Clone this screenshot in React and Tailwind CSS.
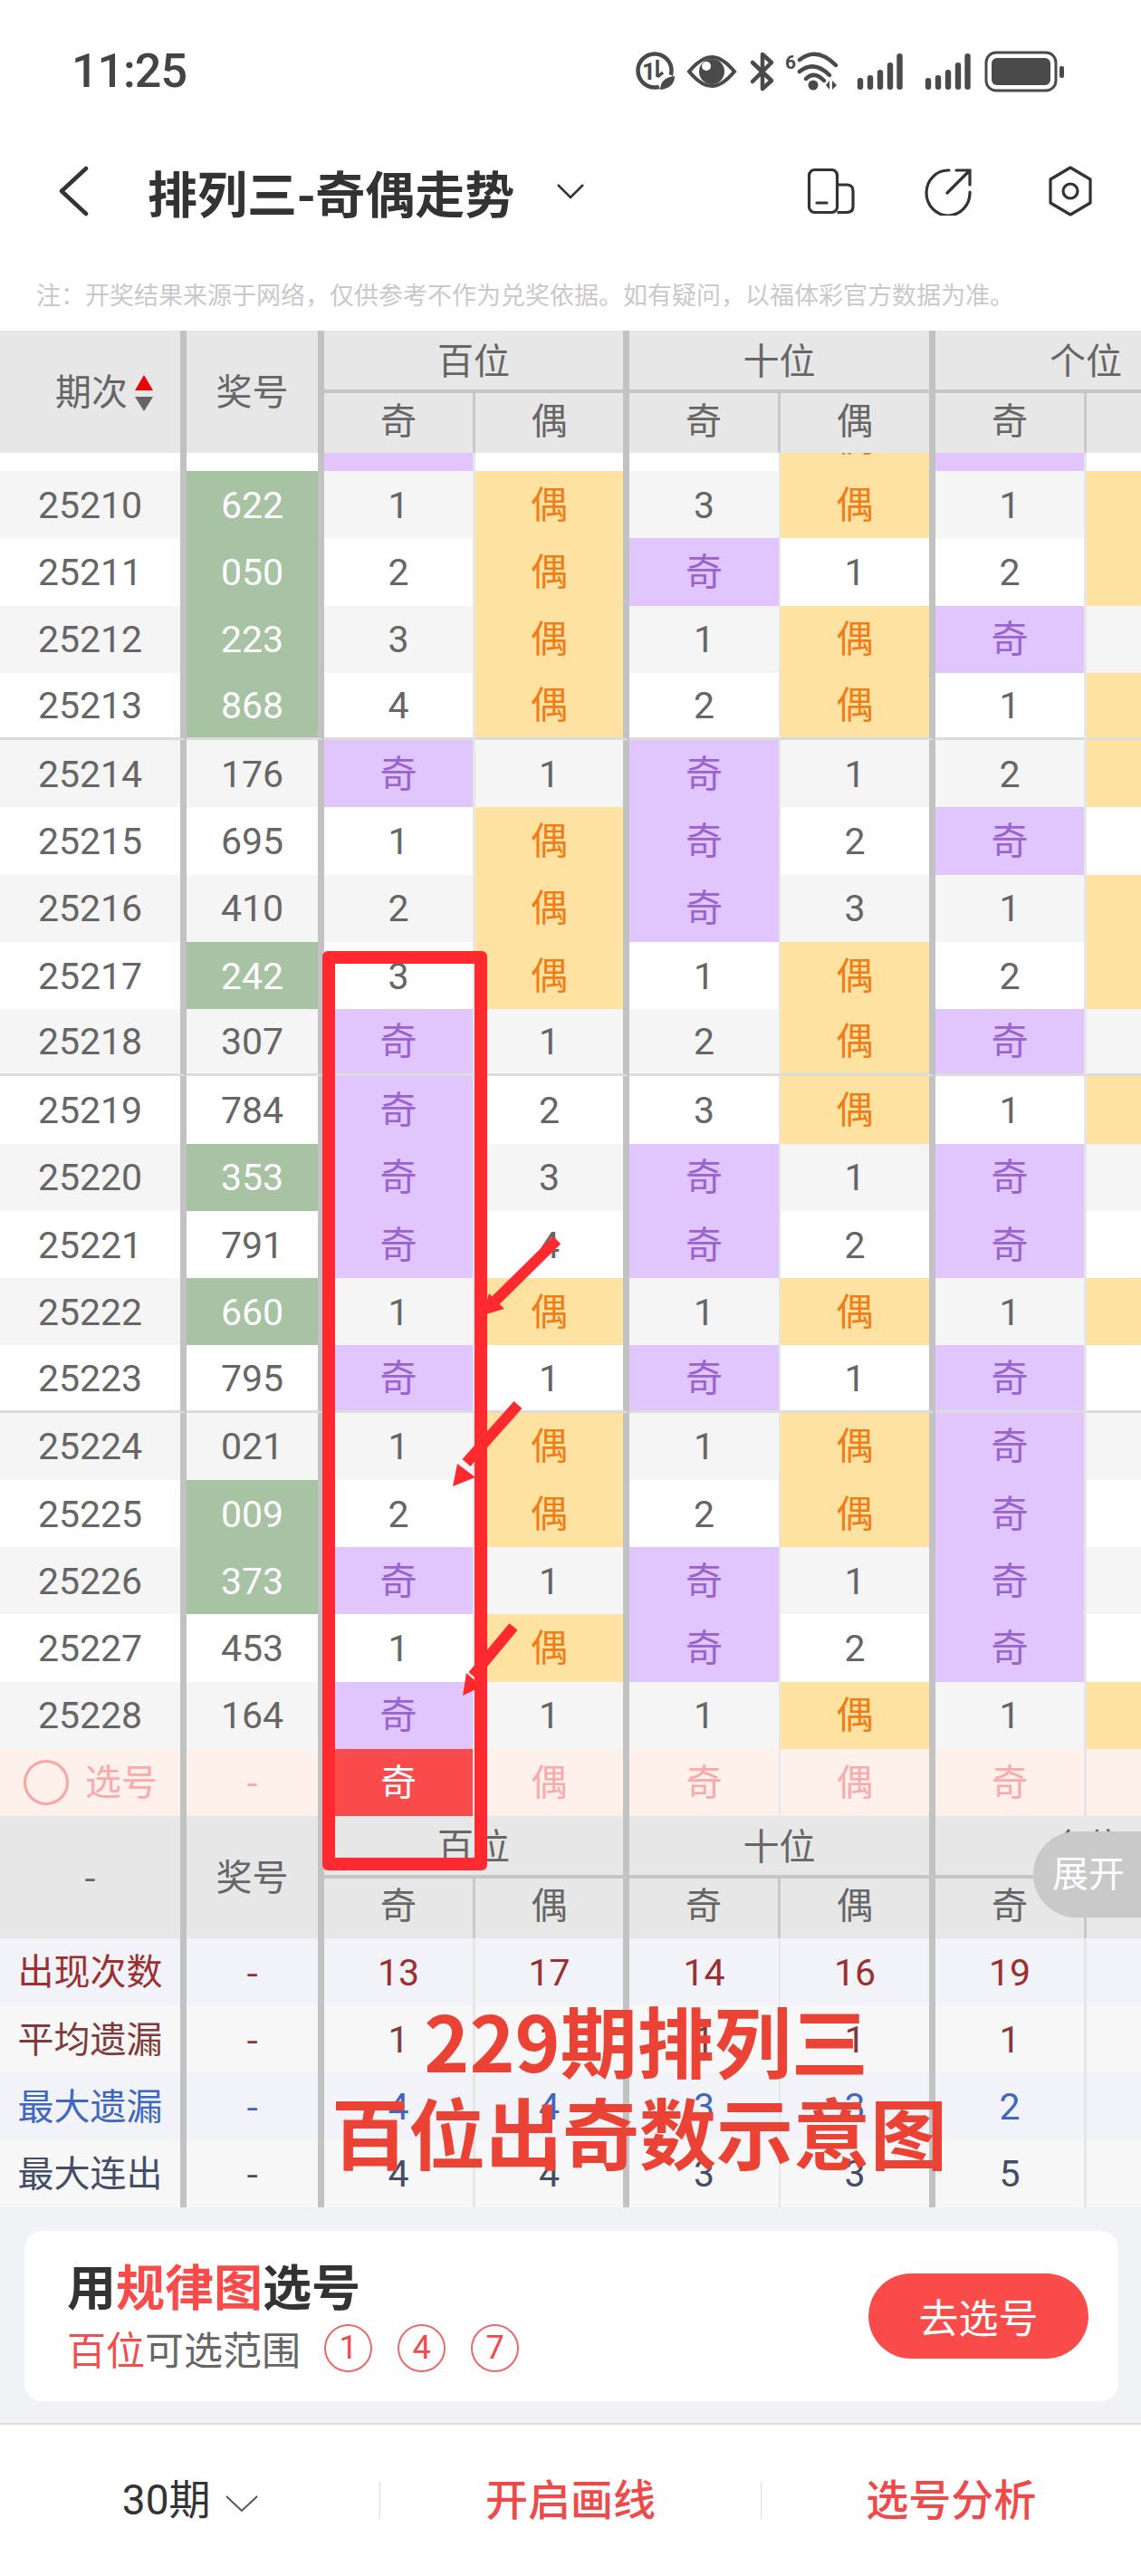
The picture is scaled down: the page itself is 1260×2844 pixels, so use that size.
import React from 'react';

const grid = 'grid grid-cols-[206px_152px_167px_170px_167px_171px_167px_165px]';
const cjk = "font-['Noto_Sans_CJK_SC',sans-serif]";
const sep = [
  'border-r-[7px] border-r-[#c2c2c2]',
  'border-r-[7px] border-r-[#c2c2c2]',
  'border-r-[3px] border-r-[#e6e6e6]',
  'border-r-[7px] border-r-[#c2c2c2]',
  'border-r-[2px] border-r-[#e6e6e6]',
  'border-r-[7px] border-r-[#c2c2c2]',
  'border-r-[3px] border-r-[#e6e6e6]',
  '',
];

// period, number, green?, then 百 / 十 / 个 values
const rows = [
  ['25210', '622', 1, 1, '偶', 3, '偶', 1, '偶'],
  ['25211', '050', 1, 2, '偶', '奇', 1, 2, '偶'],
  ['25212', '223', 1, 3, '偶', 1, '偶', '奇', 1],
  ['25213', '868', 1, 4, '偶', 2, '偶', 1, '偶'],
  ['25214', '176', 0, '奇', 1, '奇', 1, 2, '偶'],
  ['25215', '695', 0, 1, '偶', '奇', 2, '奇', 1],
  ['25216', '410', 0, 2, '偶', '奇', 3, 1, '偶'],
  ['25217', '242', 1, 3, '偶', 1, '偶', 2, '偶'],
  ['25218', '307', 0, '奇', 1, 2, '偶', '奇', 1],
  ['25219', '784', 0, '奇', 2, 3, '偶', 1, '偶'],
  ['25220', '353', 1, '奇', 3, '奇', 1, '奇', 1],
  ['25221', '791', 0, '奇', 4, '奇', 2, '奇', 2],
  ['25222', '660', 1, 1, '偶', 1, '偶', 1, '偶'],
  ['25223', '795', 0, '奇', 1, '奇', 1, '奇', 1],
  ['25224', '021', 0, 1, '偶', 1, '偶', '奇', 1],
  ['25225', '009', 1, 2, '偶', 2, '偶', '奇', 2],
  ['25226', '373', 1, '奇', 1, '奇', 1, '奇', 3],
  ['25227', '453', 0, 1, '偶', '奇', 2, '奇', 4],
  ['25228', '164', 0, '奇', 1, 1, '偶', 1, '偶'],
];

const stats = [
  { label: '出现次数', text: 'text-[#9c2f2f]', bg: 'bg-[#f2f3f8]', vals: [13, 17, 14, 16, 19] },
  { label: '平均遗漏', text: 'text-[#7f3b3b]', bg: 'bg-[#f7f7f7]', vals: [1, 1, 1, 1, 1] },
  { label: '最大遗漏', text: 'text-[#3f67bf]', bg: 'bg-[#f2f3f8]', vals: [4, 4, 3, 3, 2] },
  { label: '最大连出', text: 'text-[#434d68]', bg: 'bg-[#f7f7f7]', vals: [4, 4, 3, 3, 5] },
];

const Cell = ({ idx, value, base, line }) => {
  let look = `${base} text-[#666666]`;
  if (value === '奇') look = 'bg-[#e0c6fd] text-[#9a63cf]';
  if (value === '偶') look = 'bg-[#fee2a1] text-[#ee7d1a]';
  return (
    <div className={`flex items-center justify-center pt-[3px] ${sep[idx]} ${look} ${line ? 'border-b-[3px] border-b-[#dcdcdc]' : ''}`}>
      {value}
    </div>
  );
};

const DataRow = ({ row, index }) => {
  const base = index % 2 === 0 ? 'bg-[#f5f5f5]' : 'bg-white';
  const line = index === 3 || index === 8 || index === 13;
  return (
    <div className={`${grid} h-[74.26px] text-[41px]`}>
      <Cell idx={0} value={row[0]} base={base} line={line} />
      <div className={`flex items-center justify-center pt-[3px] ${sep[1]} ${row[2] ? 'bg-[#a8c2a4] text-white' : `${base} text-[#666666]`} ${line ? 'border-b-[3px] border-b-[#dcdcdc]' : ''}`}>
        {row[1]}
      </div>
      {row.slice(3).map((v, i) => (
        <Cell key={i} idx={i + 2} value={v} base={base} line={line} />
      ))}
    </div>
  );
};

const TableHead = ({ first, firstClass }) => (
  <div className={`${grid} bg-[#e7e7e7] text-[40px] text-[#666666] h-[135px]`}>
    <div className={`row-span-2 flex items-center pt-[3px] ${sep[0]} ${firstClass}`}>{first}</div>
    <div className={`row-span-2 flex items-center justify-center pt-[3px] ${sep[1]}`}>奖号</div>
    {['百位', '十位', '个位'].map((t, i) => (
      <div key={t} className={`col-span-2 h-[69px] pt-[5px] flex items-center justify-center border-b-[4px] border-b-[#c6c6c6] ${i < 2 ? sep[3] : ''}`}>
        {t}
      </div>
    ))}
    {['奇', '偶', '奇', '偶', '奇', ''].map((t, i) => (
      <div key={i} className={`h-[66px] pb-[3px] flex items-center justify-center ${i % 2 === 0 ? 'border-r-[3px] border-r-[#c9c9c9]' : i < 5 ? sep[3] : ''}`}>
        {t}
      </div>
    ))}
  </div>
);

const StatusIcons = () => (
  <svg width="474" height="56" viewBox="703 50 474 56" fill="none" stroke="#4a4a4a">
    {/* data saver */}
    <circle cx="724" cy="77" r="18.5" strokeWidth="4.5" />
    <text x="710" y="87" fontSize="26" fontWeight="700" fill="#4a4a4a" stroke="none" fontFamily="Roboto">1</text>
    <path d="M727 65V84M727 84L733 79" strokeWidth="3.5" />
    <circle cx="738" cy="91" r="10" fill="#fff" stroke="none" />
    <path d="M730 98C730 89 736 84 746 83C746 92 740 97 730 98Z" fill="#4a4a4a" stroke="none" />
    {/* eye */}
    <path d="M762 78C772 66 780 62 787 62C794 62 802 66 812 78C802 90 794 94 787 94C780 94 772 90 762 78Z" strokeWidth="4" />
    <circle cx="787" cy="78" r="14" fill="#4a4a4a" stroke="none" />
    <circle cx="781" cy="72" r="5" fill="#fff" stroke="none" />
    {/* bluetooth */}
    <path d="M832 68L853 88L843 97V78M843 76V59L853 68L832 89" strokeWidth="4.5" strokeLinecap="round" strokeLinejoin="round" />
    {/* wifi 6 */}
    <text x="868" y="75" fontSize="21" fontWeight="700" fill="#4a4a4a" stroke="none" fontFamily="Roboto">6</text>
    <path d="M884 65Q903 50 924 71M884 78Q900 65 917 82M891 86Q900 77 911 88" strokeWidth="4.5" strokeLinecap="round" />
    <circle cx="899" cy="93" r="5.5" fill="#4a4a4a" stroke="none" />
    <path d="M913 93L917 88V98ZM920 88V98L925 93Z" fill="#4a4a4a" stroke="none" />
    {/* signal */}
    {[[951, 85], [962, 82], [973, 76], [984, 68], [994.5, 58], [1026, 85], [1037, 82], [1048, 76], [1059, 68], [1069.5, 58]].map(([x, y]) => (
      <rect key={x} x={x - 3.2} y={y} width="6.4" height={98 - y} rx="3.2" fill="#4a4a4a" stroke="none" />
    ))}
    {/* battery */}
    <rect x="1090" y="57" width="77" height="42" rx="11" strokeWidth="3" />
    <rect x="1096" y="63" width="65" height="30" rx="6" fill="#4a4a4a" stroke="none" />
    <rect x="1171" y="72" width="5" height="13" rx="2" fill="#4a4a4a" stroke="none" />
  </svg>
);

const Arrows = () => (
  <svg className="absolute left-0 top-0 pointer-events-none" width="1260" height="2844" viewBox="0 0 1260 2844" fill="#fe2a2f" stroke="none">
    <path d="M615 1369L545 1438" stroke="#fe2a2f" strokeWidth="12" />
    <polygon points="533,1452 557,1445 540,1428" />
    <path d="M572 1551L515 1615" stroke="#fe2a2f" strokeWidth="12" />
    <polygon points="500,1641 505,1616 525,1631" />
    <path d="M567 1796L522 1850" stroke="#fe2a2f" strokeWidth="12" />
    <polygon points="511,1872 515,1847 532,1862" />
  </svg>
);

export default function App() {
  return (
    <div className="relative w-[1260px] h-[2844px] overflow-hidden bg-white font-['Roboto','Noto_Sans_CJK_SC',sans-serif]">
      {/* status bar */}
      <div className="h-[157px] flex items-center justify-between pl-[79px] pr-[84px]">
        <span className="text-[52px] leading-none font-medium text-[#444444] tracking-[-1px]">11:25</span>
        <StatusIcons />
      </div>

      {/* title bar */}
      <div className="h-[108px] flex items-center">
        <svg className="ml-[64px]" width="34" height="56" viewBox="0 0 34 56" fill="none" stroke="#333333" strokeWidth="4.5" strokeLinecap="round" strokeLinejoin="round">
          <path d="M31 3L4 28L31 53" />
        </svg>
        <span className={`ml-[65px] text-[55px] leading-none font-bold text-[#333333] ${cjk}`}>排列三-奇偶走势</span>
        <svg className="ml-[46px]" width="32" height="18" viewBox="0 0 32 18" fill="none" stroke="#333333" strokeWidth="2.5">
          <path d="M2 2L16 16L30 2" />
        </svg>
        <svg className="ml-auto" width="54" height="52" viewBox="0 0 54 52" fill="none" stroke="#333333" strokeWidth="3.2" strokeLinejoin="round">
          <rect x="2.5" y="2.5" width="31" height="47" rx="6" />
          <path d="M33.5 19H44Q51 19 51 26V43Q51 49.5 44 49.5H33.5" />
          <path d="M11 39H22" strokeLinecap="round" />
        </svg>
        <svg className="ml-[75px]" width="54" height="54" viewBox="0 0 54 54" fill="none" stroke="#333333" strokeWidth="3.2" strokeLinecap="round">
          <path d="M28 4A24 25 0 1 0 51 28" />
          <path d="M26 29L50 5M36 4H51V20" />
        </svg>
        <svg className="ml-[83px] mr-[53px]" width="50" height="56" viewBox="0 0 50 56" fill="none" stroke="#333333" strokeWidth="3.2" strokeLinejoin="round">
          <path d="M25 2L47 15V41L25 54L3 41V15Z" />
          <circle cx="25" cy="28" r="8" />
        </svg>
      </div>

      {/* note */}
      <div className={`h-[100px] pt-[20px] pl-[40px] flex items-center text-[27px] text-[#c9c9c9] whitespace-nowrap ${cjk}`}>
        注：开奖结果来源于网络，仅供参考不作为兑奖依据。如有疑问，以福体彩官方数据为准。
      </div>

      {/* table */}
      <TableHead
        first={
          <>
            <span>期次</span>
            <svg className="ml-[8px]" width="20" height="40" viewBox="0 0 20 40">
              <polygon points="10,0 20,17 0,17" fill="#f00000" />
              <polygon points="0,24 20,24 10,40" fill="#666666" />
            </svg>
          </>
        }
        firstClass="pl-[61px]"
      />

      <div className="h-[20px] overflow-hidden">
        <div className="-mt-[54px]">
          <div className={`${grid} h-[74.26px] text-[41px] bg-white`}>
            <Cell idx={0} value="" base="bg-white" />
            <Cell idx={1} value="" base="bg-white" />
            <div className={`bg-[#e0c6fd] ${sep[2]}`} />
            <Cell idx={3} value="" base="bg-white" />
            <Cell idx={4} value="" base="bg-white" />
            <Cell idx={5} value="偶" base="bg-white" />
            <div className={`bg-[#e0c6fd] ${sep[6]}`} />
            <Cell idx={7} value="" base="bg-white" />
          </div>
        </div>
      </div>

      {rows.map((row, i) => (
        <DataRow key={row[0]} row={row} index={i} />
      ))}

      {/* pick row */}
      <div className={`${grid} h-[74px] bg-[#fef0ea] text-[40px] text-[#f9aaaa]`}>
        <div className={`flex items-center pl-[26px] gap-[18px] ${sep[0]}`}>
          <span className="w-[50px] h-[50px] rounded-full border-[3px] border-[#f7a5a5]" />
          <span className="pt-[3px]">选号</span>
        </div>
        <div className={`flex items-center justify-center pb-[5px] ${cjk} ${sep[1]}`}>-</div>
        <div className={`flex items-center justify-center pt-[3px] bg-[#f94b4b] text-white ${sep[2]}`}>奇</div>
        <div className={`flex items-center justify-center pt-[3px] ${sep[3]}`}>偶</div>
        <div className={`flex items-center justify-center pt-[3px] ${sep[4]}`}>奇</div>
        <div className={`flex items-center justify-center pt-[3px] ${sep[5]}`}>偶</div>
        <div className={`flex items-center justify-center pt-[3px] ${sep[6]}`}>奇</div>
        <div />
      </div>

      <TableHead first={<span className={`pb-[8px] ${cjk}`}>-</span>} firstClass="justify-center" />

      {stats.map((s) => (
        <div key={s.label} className={`${grid} h-[74.25px] text-[41px] ${s.bg} ${s.text}`}>
          <div className={`flex items-center justify-center pt-[3px] text-[40px] ${sep[0]}`}>{s.label}</div>
          <div className={`flex items-center justify-center pb-[5px] ${cjk} ${sep[1]}`}>-</div>
          {[...s.vals, ''].map((v, i) => (
            <div key={i} className={`flex items-center justify-center pt-[3px] ${sep[i + 2]}`}>{v}</div>
          ))}
        </div>
      ))}

      {/* rule card */}
      <div className="h-[240px] bg-[#f1f2f5] pt-[26px] pl-[27px] pr-[25px] border-b-[2px] border-b-[#dddddd]">
        <div className="h-[188px] bg-white rounded-[20px] flex items-center justify-between pl-[47px] pr-[33px]">
          <div className={`flex flex-col pb-[3px] ${cjk}`}>
            <div className="text-[54px] leading-[70px] font-bold text-[#333333]">
              用<span className="text-[#fa4b4b]">规律图</span>选号
            </div>
            <div className="flex items-center mt-[4px] text-[43px] leading-[60px] text-[#666666]">
              <span className="text-[#ef4f4f]">百位</span>可选范围
              <div className="flex gap-[28px] ml-[26px] font-['Roboto',sans-serif]">
                {[1, 4, 7].map((n) => (
                  <span key={n} className="w-[53px] h-[53px] rounded-full border-[2px] border-[#e86a6a] text-[#ef4a4a] text-[36px] flex items-center justify-center">
                    {n}
                  </span>
                ))}
              </div>
            </div>
          </div>
          <div className={`w-[243px] h-[94px] rounded-full bg-[#fa4b4b] text-white text-[44px] flex items-center justify-center ${cjk}`}>
            去选号
          </div>
        </div>
      </div>

      {/* bottom bar */}
      <div className="h-[165px] flex items-center text-[47px] pt-[3px]">
        <div className="flex-1 flex items-center justify-center text-[#333333]">
          <span className="text-[46px]">30期</span>
          <svg className="ml-[16px] mt-[6px]" width="36" height="20" viewBox="0 0 36 20" fill="none" stroke="#555555" strokeWidth="2">
            <path d="M1 2L18 18L35 2" />
          </svg>
        </div>
        <div className="w-px h-[41px] bg-[#dddddd]" />
        <div className="flex-1 flex items-center justify-center text-[#ef4a4a] font-medium">开启画线</div>
        <div className="w-px h-[41px] bg-[#dddddd]" />
        <div className="flex-1 flex items-center justify-center text-[#ef4a4a] font-medium">选号分析</div>
      </div>

      {/* red hand-drawn marks */}
      <div className="absolute left-[356px] top-[1050px] w-[182px] h-[1015px] border-[14px] border-[#fe2a2f] rounded-[6px]" />
      <Arrows />

      <div className={`absolute left-[366px] top-[2200px] w-[675px] text-center whitespace-nowrap text-[85px] leading-[101px] font-bold text-[#ea4335] ${cjk}`}>
        <div className="pl-[20px]">229期排列三</div>
        <div>百位出奇数示意图</div>
      </div>

      <div className="absolute right-0 top-[2022px] w-[119px] h-[95px] rounded-l-[48px] bg-[#c9c9c9] text-white text-[40px] flex items-center justify-end pr-[18px]">
        展开
      </div>
    </div>
  );
}
